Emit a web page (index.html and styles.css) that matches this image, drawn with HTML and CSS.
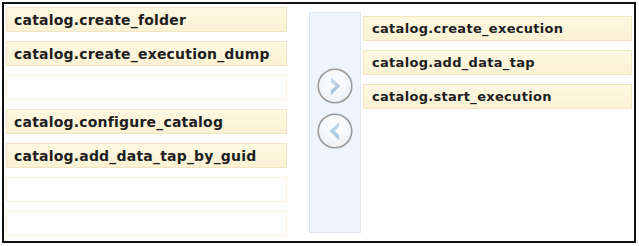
FILE: index.html
```html
<!DOCTYPE html>
<html>
<head>
<meta charset="utf-8">
<link rel="stylesheet" href="styles.css">
</head>
<body>
<div class="frame">
  <div class="list list-left">
    <div class="item">catalog.create_folder</div>
    <div class="item">catalog.create_execution_dump</div>
    <div class="item empty"></div>
    <div class="item">catalog.configure_catalog</div>
    <div class="item">catalog.add_data_tap_by_guid</div>
    <div class="item empty"></div>
    <div class="item empty"></div>
  </div>
  <div class="mid">
    <div class="btn">
      <svg width="36" height="36" viewBox="0 0 36 36">
        <defs>
          <radialGradient id="g1" cx="50%" cy="40%" r="60%">
            <stop offset="0%" stop-color="#ffffff"/>
            <stop offset="100%" stop-color="#eef1f4"/>
          </radialGradient>
          <linearGradient id="a1" x1="0" y1="0" x2="0" y2="1">
            <stop offset="0%" stop-color="#c9dced"/>
            <stop offset="100%" stop-color="#9fbfdc"/>
          </linearGradient>
        </defs>
        <circle cx="18" cy="18" r="16.8" fill="url(#g1)" stroke="#9a9a9a" stroke-width="1.6"/>
        <path d="M14 9 L23.5 18 L14 27 L14 22 L18.5 18 L14 14 Z" fill="url(#a1)"/>
      </svg>
    </div>
    <div class="btn">
      <svg width="36" height="36" viewBox="0 0 36 36">
        <circle cx="18" cy="18" r="16.8" fill="url(#g1)" stroke="#9a9a9a" stroke-width="1.6"/>
        <path d="M22 9 L12.5 18 L22 27 L22 22 L17.5 18 L22 14 Z" fill="url(#a1)"/>
      </svg>
    </div>
  </div>
  <div class="list list-right">
    <div class="item">catalog.create_execution</div>
    <div class="item">catalog.add_data_tap</div>
    <div class="item">catalog.start_execution</div>
  </div>
</div>
</body>
</html>
```
FILE: styles.css
```css
html, body {
  margin: 0;
  padding: 0;
  background: #ffffff;
}
body {
  font-family: "DejaVu Sans", Verdana, sans-serif;
}
.frame {
  box-sizing: border-box;
  margin: 2px 0 0 2px;
  width: 634px;
  height: 241px;
  border: 2px solid #111111;
  display: flex;
  align-items: flex-start;
  padding-left: 2px;
}
.list {
  display: flex;
  flex-direction: column;
  gap: 9px;
}
.list-left {
  width: 281px;
  margin-top: 3px;
}
.list-right {
  width: 269px;
  margin-top: 12px;
  margin-left: 2px;
}
.item {
  box-sizing: border-box;
  height: 25px;
  border: 1px solid #f1e6c2;
  background: linear-gradient(to bottom, #fdf8e2 0%, #fbf2d4 100%);
  font-weight: bold;
  color: #1e1e1e;
  display: flex;
  align-items: center;
  white-space: nowrap;
}
.list-left .item {
  font-size: 14px;
  letter-spacing: 0.2px;
  padding-left: 7px;
}
.list-right .item {
  font-size: 13px;
  letter-spacing: 0.3px;
  padding-left: 8px;
}
.item.empty {
  background: #ffffff;
  border-color: #f8f1d8;
}
.mid {
  box-sizing: border-box;
  width: 52px;
  height: 221px;
  margin-top: 8px;
  margin-left: 22px;
  background: #eef4fb;
  border: 1px solid #dde7f1;
  display: flex;
  flex-direction: column;
  align-items: center;
  padding-top: 55px;
  gap: 9px;
}
.btn {
  width: 36px;
  height: 36px;
}
.btn svg {
  display: block;
}
```
